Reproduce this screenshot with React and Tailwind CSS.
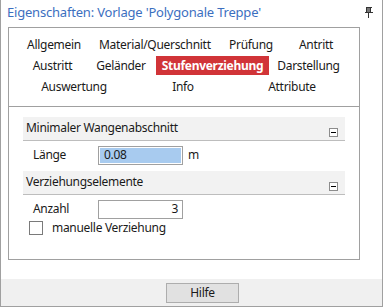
import React from 'react';

const font = { fontFamily: '"Noto Sans", "Open Sans", sans-serif' };

function Tab({ w, label, active }) {
  if (active) {
    return (
      <div className={`${w} h-[19px] bg-[#d13438] text-white font-bold flex items-center justify-center`}>
        {label}
      </div>
    );
  }
  return <div className={`${w} text-center`}>{label}</div>;
}

function Collapse() {
  return (
    <div className="w-[9px] h-[9px] border border-[#8c8c8c] bg-white flex items-center justify-center">
      <div className="w-[5px] h-[1px] bg-black" />
    </div>
  );
}

function SectionHeader({ title }) {
  return (
    <div className="mx-[14px] h-[24px] bg-[#f2f2f2] border-b border-[#bdbdbd] flex items-center justify-between pl-[3px] pr-[7px]">
      <span className="-mt-[1px]">{title}</span>
      <div className="self-end mb-[3px]">
        <Collapse />
      </div>
    </div>
  );
}

function PinIcon() {
  return (
    <svg width="9" height="11" viewBox="0 0 9 11" className="block">
      <path d="M1.5 0.5h6M2.5 0.5v5M6.5 0.5v5M0.5 5.5h8M4.5 5.5v5" stroke="#333" strokeWidth="1" fill="none" shapeRendering="crispEdges" />
      <rect x="3" y="1" width="3" height="4" fill="#777" />
    </svg>
  );
}

export default function App() {
  return (
    <div className="w-[383px] h-[307px] bg-white border-x border-b border-[#a0a0a0] flex flex-col text-[12px] tracking-[-0.3px] text-[#1a1a1a] overflow-hidden" style={font}>
      <div className="h-[27px] flex items-center justify-between pl-[6px] pr-[9px]">
        <span className="text-[13px] tracking-[-0.2px] text-[#3c6fbf] -mt-[2px]">Eigenschaften: Vorlage 'Polygonale Treppe'</span>
        <div className="-mt-[2px]"><PinIcon /></div>
      </div>

      <div className="ml-[7px] w-[352px] h-[233px] border border-[#a0a0a0] flex flex-col">
        <div className="pt-[6px] h-[78px] flex flex-col">
          <div className="h-[21px] flex items-center">
            <Tab w="w-[90px]" label="Allgemein" />
            <Tab w="w-[110px]" label="Material/Querschnitt" />
            <Tab w="w-[84px]" label="Prüfung" />
            <Tab w="w-[46px]" label="Antritt" />
          </div>
          <div className="h-[21px] flex items-center">
            <Tab w="w-[87px]" label="Austritt" />
            <Tab w="w-[50px]" label="Geländer" />
            <div className="w-[10px]" />
            <Tab w="w-[113px]" label="Stufenverziehung" active />
            <Tab w="w-[79px]" label="Darstellung" />
          </div>
          <div className="h-[21px] flex items-center">
            <Tab w="w-[130px]" label="Auswertung" />
            <Tab w="w-[88px]" label="Info" />
            <Tab w="w-[130px]" label="Attribute" />
          </div>
        </div>
        <div className="border-t border-[#a0a0a0]" />

        <div className="pt-[10px] flex flex-col">
          <SectionHeader title="Minimaler Wangenabschnitt" />
          <div className="h-[27px] flex items-center pl-[24px] pt-[1px]">
            <span className="w-[65px]">Länge</span>
            <div className="w-[85px] h-[19px] border border-[#a0a0a0] bg-white p-[1px]">
              <div className="h-full bg-[#a8cbef] flex items-center pl-[4px]">0.08</div>
            </div>
            <span className="ml-[5px]">m</span>
          </div>
          <div className="h-[3px]" />
          <SectionHeader title="Verziehungselemente" />
          <div className="h-[24px] flex items-center pl-[24px] pt-[4px]">
            <span className="w-[65px]">Anzahl</span>
            <div className="w-[85px] h-[19px] border border-[#a0a0a0] bg-white flex items-center justify-end pr-[4px]">3</div>
          </div>
          <div className="h-[15px] flex items-center pl-[20px] mt-[1px]">
            <div className="w-[14px] h-[14px] border border-[#7a7a7a] bg-white" />
            <span className="ml-[9px]">manuelle Verziehung</span>
          </div>
        </div>
      </div>

      <div className="h-[19px]" />
      <div className="flex-1 bg-[#f0f0f0] flex justify-center pt-[4px] pl-[22px]">
        <div className="w-[73px] h-[20px] bg-[#e1e1e1] border border-[#adadad] flex items-center justify-center">Hilfe</div>
      </div>
    </div>
  );
}
